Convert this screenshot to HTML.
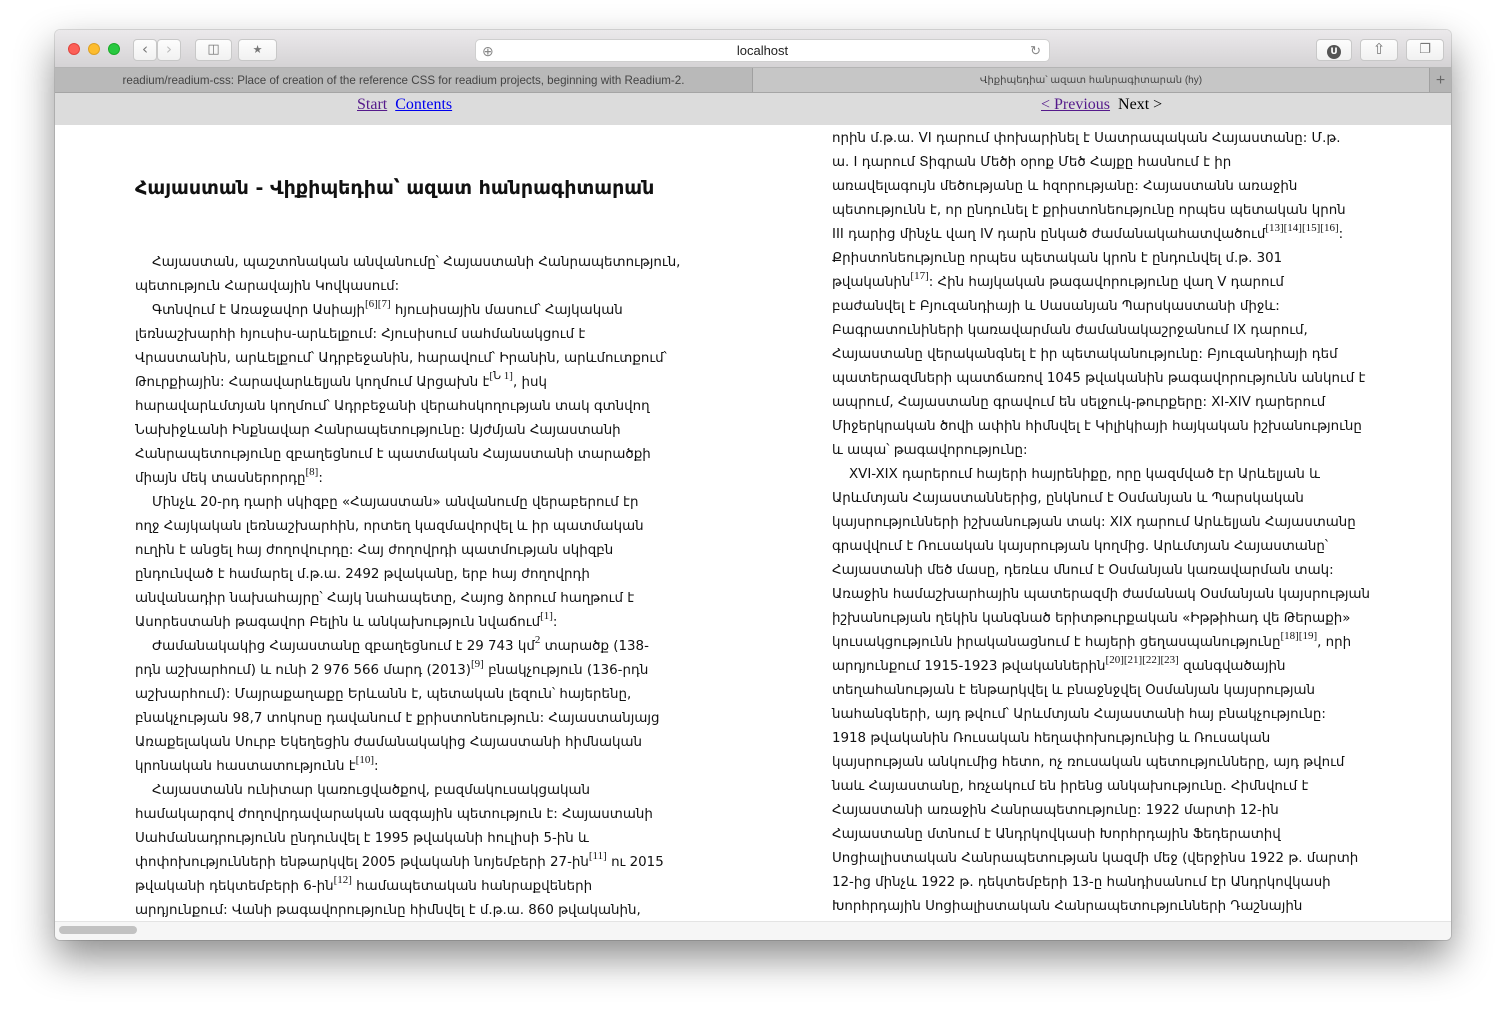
<!DOCTYPE html>
<html><head><meta charset="utf-8"><style>
*{margin:0;padding:0;box-sizing:border-box}
body{width:1507px;height:1021px;background:#fff;position:relative;overflow:hidden;font-family:"DejaVu Sans","Liberation Sans",sans-serif}
.win{position:absolute;left:55px;top:30px;width:1396px;height:910px;border-radius:5px;overflow:hidden;box-shadow:0 18px 40px rgba(0,0,0,.45),0 0 0 1px rgba(0,0,0,.12);background:#fff}
.tb{position:absolute;left:0;top:0;width:100%;height:38px;background:linear-gradient(#ebe9eb,#d5d3d5);border-bottom:1px solid #b4b4b4}
.dot{position:absolute;top:13px;width:12px;height:12px;border-radius:50%}
.btn{position:absolute;top:9px;height:22px;background:linear-gradient(#fdfdfd,#f1f1f1);border:1px solid #c8c8c8;border-radius:4px;color:#777;font-size:15px;text-align:center;line-height:19px}
.url{position:absolute;left:420px;top:9px;width:575px;height:23px;background:#fff;border:1px solid #cfcfcf;border-radius:5px;font-family:"Liberation Sans",sans-serif;font-size:13px;text-align:center;line-height:22px;color:#222}
.tabs{position:absolute;top:38px;left:0;width:100%;height:25px;background:#b5b5b5;border-bottom:1px solid #a5a5a5;font-family:"Liberation Sans","DejaVu Sans",sans-serif;font-size:11.6px;color:#444}
.tab{position:absolute;top:0;height:24px;line-height:26px;text-align:center}
.nav{position:absolute;top:63px;left:0;width:100%;height:32px;background:#dcdcdc;font-family:"Liberation Serif",serif;font-size:16px}
.nav a{color:#00e;text-decoration:underline}
.content{position:absolute;top:95px;left:0;width:100%;height:796px;background:#fff}
.col{position:absolute;font-size:13.4px;line-height:24px;color:#111;white-space:nowrap}
.col div{height:24px}
.in{padding-left:17px}
sup{font-family:"Liberation Serif",serif;font-size:11px;vertical-align:7px;line-height:0}
h1{position:absolute;left:80px;top:52px;font-size:19px;font-weight:bold;white-space:nowrap;color:#111}
.sb{position:absolute;left:0;top:891px;width:100%;height:19px;background:#f6f6f6;border-top:1px solid #e4e4e4}
.thumb{position:absolute;left:4px;top:4px;width:78px;height:8px;border-radius:4px;background:#c2c2c2}
</style></head><body>
<div class="win">
 <div class="tb">
  <div class="dot" style="left:13px;background:#fc5f57;border:1px solid #e0443e"></div>
  <div class="dot" style="left:33px;background:#fdbc2e;border:1px solid #dea123"></div>
  <div class="dot" style="left:53px;background:#28c840;border:1px solid #1aab29"></div>
  <div class="btn" style="left:78px;width:24px">&#8249;</div>
  <div class="btn" style="left:102px;width:24px;color:#bbb">&#8250;</div>
  <div class="btn" style="left:140px;width:37px;font-size:13px">&#9707;</div>
  <div class="btn" style="left:183px;width:39px;font-size:11px">&#9733;</div>
  <div class="url"><span style="position:absolute;left:6px;top:0;color:#888;font-size:14px">&#8853;</span>localhost<span style="position:absolute;right:8px;top:0;color:#888">&#8635;</span></div>
  <div class="btn" style="left:1261px;width:36px"><span style="display:inline-block;width:14px;height:14px;border-radius:50%;background:#555;color:#fff;font-size:9px;line-height:14px;margin-top:3px;font-weight:bold">U</span></div>
  <div class="btn" style="left:1305px;width:38px">&#8679;</div>
  <div class="btn" style="left:1351px;width:38px;font-size:13px">&#10064;</div>
 </div>
 <div class="tabs">
  <div class="tab" style="left:0;width:698px;background:#b9b9b9;border-right:1px solid #a0a0a0">readium/readium-css: Place of creation of the reference CSS for readium projects, beginning with Readium-2.</div>
  <div class="tab" style="left:698px;width:676px;background:#c6c6c6;font-size:10px">Վիքիպեդիա՝ ազատ հանրագիտարան (hy)</div>
  <div class="tab" style="left:1374px;width:22px;border-left:1px solid #a0a0a0;font-size:16px;color:#666">+</div>
 </div>
 <div class="nav">
  <div style="position:absolute;left:302px;top:3px"><a style="color:#551a8b">Start</a>&nbsp; <a>Contents</a></div>
  <div style="position:absolute;left:986px;top:3px"><a style="color:#551a8b">&lt; Previous</a>&nbsp; Next &gt;</div>
 </div>
 <div class="content">
  <h1>Հայաստան - Վիքիպեդիա՝ ազատ հանրագիտարան</h1>
  <div class="col" style="left:80px;top:126px">
<div class="in">Հայաստան, պաշտոնական անվանումը՝ Հայաստանի Հանրապետություն,</div>
<div>պետություն Հարավային Կովկասում:</div>
<div class="in">Գտնվում է Առաջավոր Ասիայի<sup>[6][7]</sup> հյուսիսային մասում՝ Հայկական</div>
<div>լեռնաշխարհի հյուսիս-արևելքում: Հյուսիսում սահմանակցում է</div>
<div>Վրաստանին, արևելքում՝ Ադրբեջանին, հարավում՝ Իրանին, արևմուտքում՝</div>
<div>Թուրքիային: Հարավարևելյան կողմում Արցախն է<sup>[Ն 1]</sup>, իսկ</div>
<div>հարավարևմտյան կողմում՝ Ադրբեջանի վերահսկողության տակ գտնվող</div>
<div>Նախիջևանի Ինքնավար Հանրապետությունը: Այժմյան Հայաստանի</div>
<div>Հանրապետությունը զբաղեցնում է պատմական Հայաստանի տարածքի</div>
<div>միայն մեկ տասներորդը<sup>[8]</sup>:</div>
<div class="in">Մինչև 20-րդ դարի սկիզբը «Հայաստան» անվանումը վերաբերում էր</div>
<div>ողջ Հայկական լեռնաշխարհին, որտեղ կազմավորվել և իր պատմական</div>
<div>ուղին է անցել հայ ժողովուրդը: Հայ ժողովրդի պատմության սկիզբն</div>
<div>ընդունված է համարել մ.թ.ա. 2492 թվականը, երբ հայ ժողովրդի</div>
<div>անվանադիր նախահայրը՝ Հայկ նահապետը, Հայոց ձորում հաղթում է</div>
<div>Ասորեստանի թագավոր Բելին և անկախություն նվաճում<sup>[1]</sup>:</div>
<div class="in">Ժամանակակից Հայաստանը զբաղեցնում է 29 743 կմ<sup>2</sup> տարածք (138-</div>
<div>րդն աշխարհում) և ունի 2 976 566 մարդ (2013)<sup>[9]</sup> բնակչություն (136-րդն</div>
<div>աշխարհում): Մայրաքաղաքը Երևանն է, պետական լեզուն՝ հայերենը,</div>
<div>բնակչության 98,7 տոկոսը դավանում է քրիստոնեություն: Հայաստանյայց</div>
<div>Առաքելական Սուրբ Եկեղեցին ժամանակակից Հայաստանի հիմնական</div>
<div>կրոնական հաստատությունն է<sup>[10]</sup>:</div>
<div class="in">Հայաստանն ունիտար կառուցվածքով, բազմակուսակցական</div>
<div>համակարգով ժողովրդավարական ազգային պետություն է: Հայաստանի</div>
<div>Սահմանադրությունն ընդունվել է 1995 թվականի հուլիսի 5-ին և</div>
<div>փոփոխությունների ենթարկվել 2005 թվականի նոյեմբերի 27-ին<sup>[11]</sup> ու 2015</div>
<div>թվականի դեկտեմբերի 6-ին<sup>[12]</sup> համապետական հանրաքվեների</div>
<div>արդյունքում: Վանի թագավորությունը հիմնվել է մ.թ.ա. 860 թվականին,</div>
  </div>
  <div class="col" style="left:777px;top:2px">
<div>որին մ.թ.ա. VI դարում փոխարինել է Սատրապական Հայաստանը: Մ.թ.</div>
<div>ա. I դարում Տիգրան Մեծի օրոք Մեծ Հայքը հասնում է իր</div>
<div>առավելագույն մեծությանը և հզորությանը: Հայաստանն առաջին</div>
<div>պետությունն է, որ ընդունել է քրիստոնեությունը որպես պետական կրոն</div>
<div>III դարից մինչև վաղ IV դարն ընկած ժամանակահատվածում<sup>[13][14][15][16]</sup>:</div>
<div>Քրիստոնեությունը որպես պետական կրոն է ընդունվել մ.թ. 301</div>
<div>թվականին<sup>[17]</sup>: Հին հայկական թագավորությունը վաղ V դարում</div>
<div>բաժանվել է Բյուզանդիայի և Սասանյան Պարսկաստանի միջև:</div>
<div>Բագրատունիների կառավարման ժամանակաշրջանում IX դարում,</div>
<div>Հայաստանը վերականգնել է իր պետականությունը: Բյուզանդիայի դեմ</div>
<div>պատերազմների պատճառով 1045 թվականին թագավորությունն անկում է</div>
<div>ապրում, Հայաստանը գրավում են սելջուկ-թուրքերը: XI-XIV դարերում</div>
<div>Միջերկրական ծովի ափին հիմնվել է Կիլիկիայի հայկական իշխանությունը</div>
<div>և ապա՝ թագավորությունը:</div>
<div class="in">XVI-XIX դարերում հայերի հայրենիքը, որը կազմված էր Արևելյան և</div>
<div>Արևմտյան Հայաստաններից, ընկնում է Օսմանյան և Պարսկական</div>
<div>կայսրությունների իշխանության տակ: XIX դարում Արևելյան Հայաստանը</div>
<div>գրավվում է Ռուսական կայսրության կողմից. Արևմտյան Հայաստանը՝</div>
<div>Հայաստանի մեծ մասը, դեռևս մնում է Օսմանյան կառավարման տակ:</div>
<div>Առաջին համաշխարհային պատերազմի ժամանակ Օսմանյան կայսրության</div>
<div>իշխանության ղեկին կանգնած երիտթուրքական «Իթթիհադ վե Թերաքի»</div>
<div>կուսակցությունն իրականացնում է հայերի ցեղասպանությունը<sup>[18][19]</sup>, որի</div>
<div>արդյունքում 1915-1923 թվականներին<sup>[20][21][22][23]</sup> զանգվածային</div>
<div>տեղահանության է ենթարկվել և բնաջնջվել Օսմանյան կայսրության</div>
<div>նահանգների, այդ թվում՝ Արևմտյան Հայաստանի հայ բնակչությունը:</div>
<div>1918 թվականին Ռուսական հեղափոխությունից և Ռուսական</div>
<div>կայսրության անկումից հետո, ոչ ռուսական պետությունները, այդ թվում</div>
<div>նաև Հայաստանը, հռչակում են իրենց անկախությունը. Հիմնվում է</div>
<div>Հայաստանի առաջին Հանրապետությունը: 1922 մարտի 12-ին</div>
<div>Հայաստանը մտնում է Անդրկովկասի Խորհրդային Ֆեդերատիվ</div>
<div>Սոցիալիստական Հանրապետության կազմի մեջ (վերջինս 1922 թ. մարտի</div>
<div>12-ից մինչև 1922 թ. դեկտեմբերի 13-ը հանդիսանում էր Անդրկովկասի</div>
<div>Խորհրդային Սոցիալիստական Հանրապետությունների Դաշնային</div>
  </div>
 </div>
 <div class="sb"><div class="thumb"></div></div>
</div>
</body></html>
